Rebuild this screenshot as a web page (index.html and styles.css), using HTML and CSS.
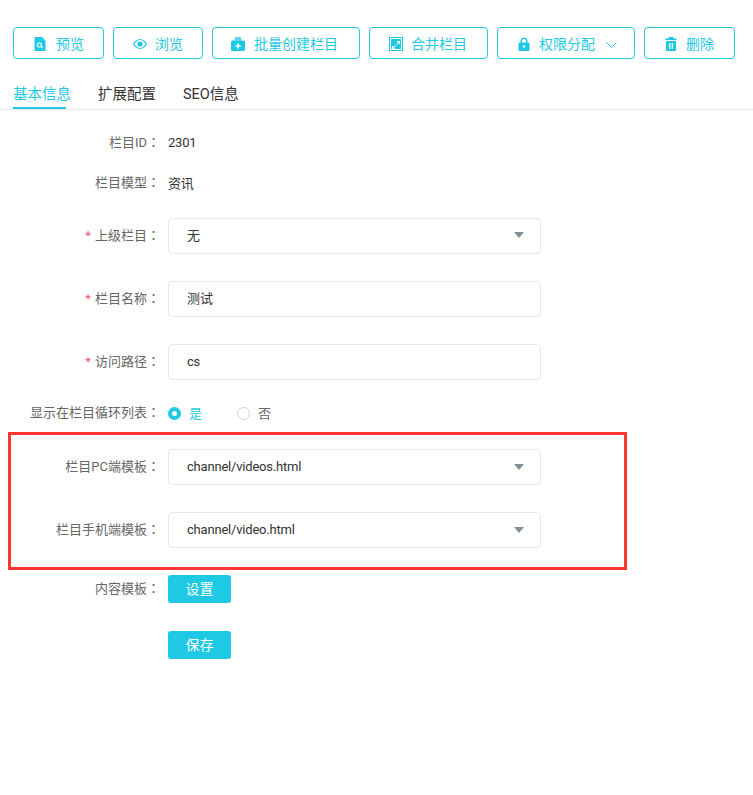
FILE: index.html
```html
<!DOCTYPE html>
<html lang="zh-CN">
<head>
<meta charset="utf-8">
<title>栏目编辑</title>
<link rel="stylesheet" href="styles.css">
</head>
<body>
<div class="page">
  <div class="toolbar">
    <a class="btn btn-preview">
      <svg class="ico" viewBox="0 0 14 14"><path fill-rule="evenodd" d="M1.500 0H9l3.500 3.500V14h-11zM6.400 5.400a2.600 2.600 0 1 0 1.500 4.700l1.500 1.500.8-.8-1.500-1.500a2.600 2.600 0 0 0-2.300-3.900zm0 1.100a1.500 1.500 0 1 1 0 3 1.500 1.500 0 0 1 0-3z"/></svg>
      <span>预览</span>
    </a>
    <a class="btn btn-view">
      <svg class="ico" viewBox="0 0 14 14"><path fill-rule="evenodd" d="M7 2C3.800 2 1.400 4.300 0 7c1.400 2.700 3.800 5 7 5s5.600-2.300 7-5c-1.400-2.700-3.800-5-7-5zm0 1a4 4 0 1 1 0 8 4 4 0 0 1 0-8zM1.300 7c.6-1 1.300-1.900 2.300-2.600a4.800 4.800 0 0 0 0 5.200C2.600 8.900 1.900 8 1.300 7zm9.100-2.600c1 .7 1.700 1.600 2.300 2.600-.6 1-1.300 1.900-2.300 2.600a4.800 4.800 0 0 0 0-5.200z"/><circle cx="7" cy="7" r="2.600"/></svg>
      <span>浏览</span>
    </a>
    <a class="btn btn-batch">
      <svg class="ico" viewBox="0 0 14 14"><path opacity=".75" d="M3.500 3.500V2C3.500.9 4.400 0 5.500 0h3c1.100 0 2 .9 2 2v1.500z"/><path fill-rule="evenodd" d="M1.500 3.500h11A1.500 1.500 0 0 1 14 5v7.500a1.500 1.500 0 0 1-1.500 1.500h-11A1.500 1.500 0 0 1 0 12.500V5a1.500 1.500 0 0 1 1.500-1.500zM6.300 6.300v2h-2v1.400h2v2h1.400v-2h2V8.300h-2v-2z"/></svg>
      <span>批量创建栏目</span>
    </a>
    <a class="btn">
      <svg class="ico" viewBox="0 0 14 14"><path fill-rule="evenodd" d="M0 0h14v14H0zM1 1v12h12V1zM2 2h10v10H2zM8 4v1h1.300L7.600 6.700l.7.700L10 5.700V7h1V4zM6.300 7.900 4 10.200V9H3v3h3v-1H4.700L7 8.600z"/></svg>
      <span>合并栏目</span>
    </a>
    <a class="btn btn-auth">
      <svg class="ico" viewBox="0 0 14 14"><path fill-rule="evenodd" d="M3.500 5.500V4a3.500 3.500 0 0 1 7 0v1.500h1A1 1 0 0 1 12.500 6.500V13a1 1 0 0 1-1 1h-9a1 1 0 0 1-1-1V6.500a1 1 0 0 1 1-1zm1.500 0h4V4a2 2 0 0 0-4 0zM7 8.200a1.300 1.300 0 1 0 0 2.600 1.300 1.300 0 0 0 0-2.600z"/></svg>
      <span>权限分配</span>
      <svg class="chev" viewBox="0 0 11 6"><path d="M.5.500 5.500 5.500 10.500.5"/></svg>
    </a>
    <a class="btn">
      <svg class="ico" viewBox="0 0 14 14"><path fill-rule="evenodd" d="M5 0h4l.7 1.500h2.800V3h-11V1.500h2.800zM2 4h10v10H2zM5 6v6h1.300V6zM7.700 6v6H9V6z"/></svg>
      <span>删除</span>
    </a>
  </div>

  <div class="tabs">
    <a class="tab tab-active">基本信息</a>
    <a class="tab">扩展配置</a>
    <a class="tab">SEO信息</a>
  </div>

  <form class="form">
    <div class="row row-info">
      <label class="label">栏目ID<span class="colon" lang="zh-TW">：</span></label>
      <span class="value">2301</span>
    </div>
    <div class="row row-info">
      <label class="label">栏目模型<span class="colon" lang="zh-TW">：</span></label>
      <span class="value">资讯</span>
    </div>
    <div class="row row-field row-first">
      <label class="label"><i class="req">*</i>上级栏目<span class="colon" lang="zh-TW">：</span></label>
      <div class="control control-cjk"><span>无</span><b class="caret"></b></div>
    </div>
    <div class="row row-field">
      <label class="label"><i class="req">*</i>栏目名称<span class="colon" lang="zh-TW">：</span></label>
      <div class="control control-cjk"><span>测试</span></div>
    </div>
    <div class="row row-field">
      <label class="label"><i class="req">*</i>访问路径<span class="colon" lang="zh-TW">：</span></label>
      <div class="control"><span>cs</span></div>
    </div>
    <div class="row row-radio">
      <label class="label">显示在栏目循环列表<span class="colon" lang="zh-TW">：</span></label>
      <div class="radios">
        <span class="radio radio-on"><b class="dot"></b><span>是</span></span>
        <span class="radio"><b class="dot"></b><span>否</span></span>
      </div>
    </div>
    <div class="row row-field row-after-radio">
      <label class="label">栏目PC端模板<span class="colon" lang="zh-TW">：</span></label>
      <div class="control"><span>channel/videos.html</span><b class="caret"></b></div>
    </div>
    <div class="row row-field">
      <label class="label">栏目手机端模板<span class="colon" lang="zh-TW">：</span></label>
      <div class="control"><span>channel/video.html</span><b class="caret"></b></div>
    </div>
    <div class="row row-action">
      <label class="label">内容模板<span class="colon" lang="zh-TW">：</span></label>
      <a class="solid">设置</a>
    </div>
    <div class="row row-action">
      <span class="label"></span>
      <a class="solid">保存</a>
    </div>
  </form>

  <div class="highlight"></div>
</div>
</body>
</html>
```

FILE: styles.css
```css
* { box-sizing: border-box; }
html, body { margin: 0; padding: 0; background: #fff; }
body {
  font-family: Roboto, "Noto Sans CJK SC", "Liberation Sans", sans-serif;
  font-size: 13px;
  color: #333;
}
.page { position: relative; width: 753px; height: 795px; overflow: hidden; }

.toolbar { display: flex; gap: 9px; padding: 27px 0 0 13px; }
.btn {
  display: flex;
  align-items: center;
  height: 32px;
  padding: 0 20px 0 19px;
  border: 1px solid #1fc8e3;
  border-radius: 4px;
  color: #1fc8e3;
  font-size: 14px;
  white-space: nowrap;
}
.btn-preview { padding-right: 19px; }
.btn-preview .ico { margin-right: 9px; }
.btn-view { padding-right: 19px; }
.btn-batch { padding-left: 18px; padding-right: 21px; }
.btn-batch .ico { margin-right: 9px; }
.btn-auth { padding-right: 17px; }
.ico { width: 14px; height: 14px; fill: #1fc8e3; margin: 2px 8px 0 0; flex: none; }
.chev { width: 11px; height: 6px; margin: 4px 0 0 11px; fill: none; stroke: #1fc8e3; stroke-width: 1; }

.tabs {
  display: flex;
  gap: 27px;
  height: 51px;
  padding: 26px 0 0 13px;
  border-bottom: 1px solid #e8e8e8;
  font-size: 14.5px;
  line-height: 20px;
}
.tab { position: relative; color: #333; }
.tab-active { color: #1fc8e3; }
.tab-active::after {
  content: "";
  position: absolute;
  left: 0;
  right: 5px;
  top: 22px;
  height: 2px;
  background: #1fc8e3;
}

.form { padding-top: 13px; }
.row { display: flex; align-items: center; }
.label {
  flex: none;
  width: 160px;
  margin-right: 8px;
  padding-bottom: 3px;
  text-align: right;
  color: #666;
  white-space: nowrap;
}
.colon { font-family: "Noto Sans CJK TC", sans-serif; }
.req { color: #f5586c; font-style: normal; margin-right: 4px; }
.value { color: #333; padding-bottom: 2px; letter-spacing: -0.2px; }
.row-info { height: 40px; }
.row-field { height: 36px; margin-bottom: 27px; }
.row-first { margin-top: 15px; }
.row-radio { height: 30px; margin-top: -9px; margin-bottom: 21px; }
.row-action { height: 28px; margin-bottom: 28px; }
.row-action .label { padding-bottom: 4px; }

.control {
  display: flex;
  align-items: center;
  justify-content: space-between;
  width: 373px;
  height: 36px;
  padding: 0 18px 2px;
  border: 1px solid #e8e8e8;
  border-radius: 4px;
  color: #333;
  letter-spacing: -0.2px;
}
.control-cjk { padding-bottom: 4px; letter-spacing: 0; }
.caret {
  width: 0;
  height: 0;
  margin: 2px -2px 0 0;
  border-left: 5px solid transparent;
  border-right: 5px solid transparent;
  border-top: 6px solid #848e96;
}

.radios { display: flex; gap: 35px; }
.radio { display: flex; align-items: center; gap: 8px; color: #666; }
.radio span { padding-bottom: 2px; }
.radio-on { color: #1fc8e3; }
.dot {
  width: 13px;
  height: 13px;
  border: 1px solid #d0d0d0;
  border-radius: 50%;
  background: #fff;
}
.radio-on .dot { border: 4px solid #1fc8e3; }

.solid {
  display: flex;
  align-items: center;
  justify-content: center;
  width: 63px;
  height: 28px;
  padding-bottom: 3px;
  border-radius: 3px;
  background: #1fc8e3;
  color: #fff;
  font-size: 14px;
}

.highlight {
  position: absolute;
  left: 8px;
  top: 432px;
  width: 619px;
  height: 138px;
  border: 3px solid #ff3535;
  pointer-events: none;
}
```
